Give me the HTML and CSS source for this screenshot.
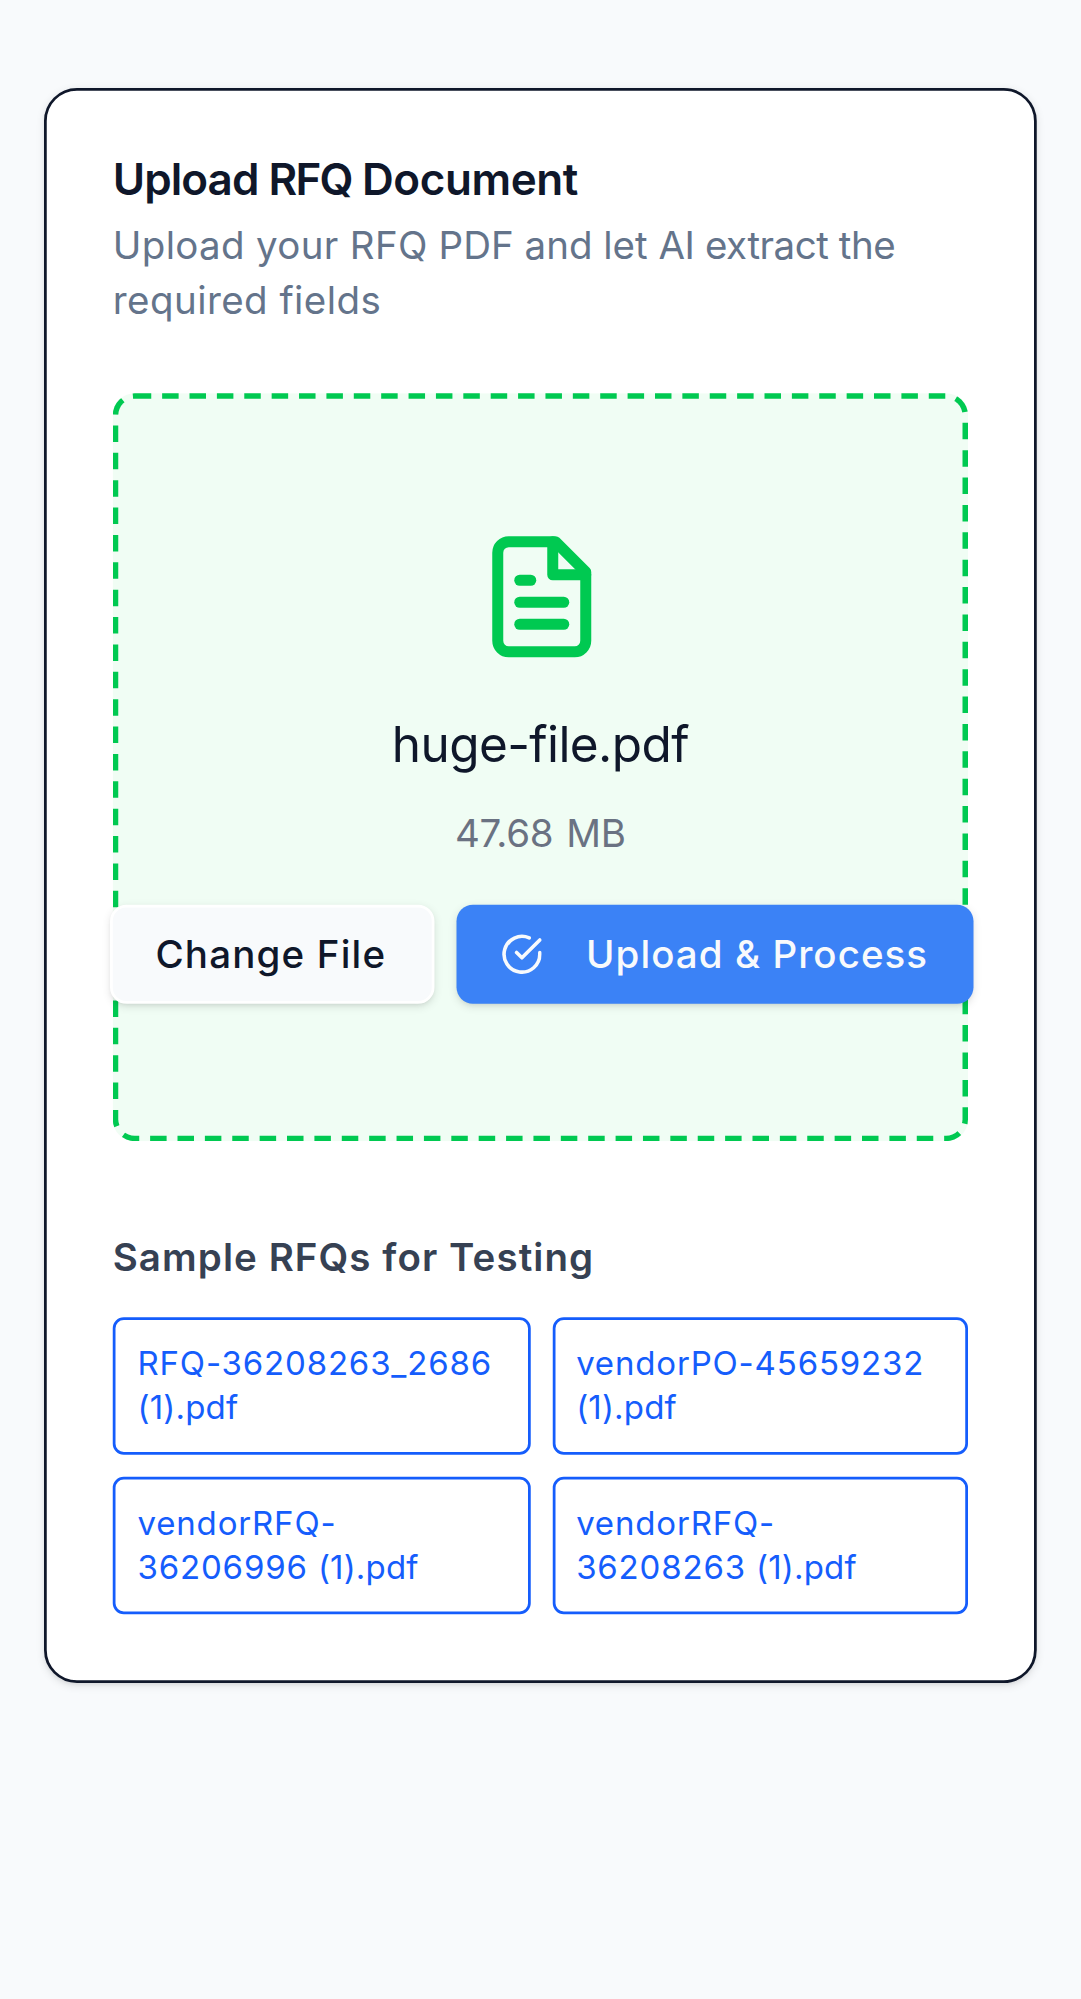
FILE: index.html
```html
<!DOCTYPE html>
<html lang="en">
<head>
<meta charset="utf-8">
<title>Upload RFQ Document</title>
<link rel="stylesheet" href="styles.css">
</head>
<body>
<main class="page">
  <section class="card">
    <header class="card-header">
      <h1 class="card-title">Upload <span class="title-acronym">RFQ</span> <span class="title-noun">Document</span></h1>
      <p class="card-description"><span class="track-wide">Upload your RFQ</span> PDF and let <span class="track-tight">AI extract the</span> <span class="track-wider">required fields</span></p>
    </header>
    <div class="dropzone">
      <svg class="file-icon" viewBox="0 0 24 24" fill="none" stroke="currentColor" stroke-width="2" stroke-linecap="round" stroke-linejoin="round" aria-hidden="true">
        <path d="M14.5 2H6a2 2 0 0 0-2 2v16a2 2 0 0 0 2 2h12a2 2 0 0 0 2-2V7.5L14.5 2z"/>
        <path d="M14 2v6h6"/>
        <path d="M10 9H8"/>
        <path d="M16 13H8"/>
        <path d="M16 17H8"/>
      </svg>
      <p class="file-name">huge-file.pdf</p>
      <p class="file-size">47.68 MB</p>
      <div class="actions">
        <button class="button button-light" type="button">Change File</button>
        <button class="button button-primary" type="button">
          <svg class="button-icon" viewBox="0 0 24 24" fill="none" stroke="currentColor" stroke-width="2" stroke-linecap="round" stroke-linejoin="round" aria-hidden="true">
            <path d="M22 11.08V12a10 10 0 1 1-5.93-9.14"/>
            <path d="m9 11 3 3L22 4"/>
          </svg>
          Upload &amp; Process
        </button>
      </div>
    </div>
    <section class="samples">
      <h2 class="samples-title">Sample RFQs for Testing</h2>
      <div class="samples-grid">
        <a class="sample">RFQ-36208263_2686 <span class="sample-suffix">(1).pdf</span></a>
        <a class="sample">vendorPO-45659232 <span class="sample-suffix">(1).pdf</span></a>
        <a class="sample">vendorRFQ-<br>36206996 <span class="sample-suffix">(1).pdf</span></a>
        <a class="sample">vendorRFQ-<br>36208263 <span class="sample-suffix">(1).pdf</span></a>
      </div>
    </section>
  </section>
</main>
</body>
</html>
```
FILE: styles.css
```css
*, *::before, *::after {
  box-sizing: border-box;
}

html {
  background: #f8fafc;
}

body {
  height: 1999px;
  margin: 0;
  overflow: hidden;
  font-family: Inter, "Liberation Sans", sans-serif;
  font-size: 14px;
  line-height: 20px;
  color: #0f172a;
}

h1, h2, p {
  margin: 0;
}

.page {
  width: 393px;
  padding: 32px 16px;
  transform: scale(2.75);
  transform-origin: 0 0;
}

.card {
  display: flex;
  flex-direction: column;
  gap: 24px;
  padding: 24px;
  background: #fff;
  border: 1px solid #0f172a;
  border-radius: 12px;
  box-shadow: 0 1px 3px rgba(0, 0, 0, 0.1), 0 1px 2px -1px rgba(0, 0, 0, 0.1);
}

.card-header {
  display: flex;
  flex-direction: column;
  gap: 6px;
}

.card-title {
  font-size: 16px;
  line-height: 16px;
  font-weight: 600;
  letter-spacing: -0.34px;
}

.title-acronym {
  letter-spacing: -0.65px;
}

.title-noun {
  letter-spacing: -0.15px;
}

.card-description {
  color: #64748b;
}

.track-wide {
  letter-spacing: 0.12px;
}

.track-wider {
  letter-spacing: 0.16px;
}

.track-tight {
  letter-spacing: -0.16px;
}

.dropzone {
  display: flex;
  flex-direction: column;
  align-items: center;
  padding: 48px;
  background: #f0fdf4;
  border: 2px dashed #00c951;
  border-radius: 8px;
}

.file-icon {
  width: 48px;
  height: 48px;
  margin-bottom: 16px;
  color: #00c951;
}

.file-name {
  margin-bottom: 8px;
  font-size: 18px;
  line-height: 28px;
  letter-spacing: -0.22px;
}

.file-size {
  margin-bottom: 16px;
  color: #6a7282;
  letter-spacing: -0.08px;
  word-spacing: 0.8px;
}

.actions {
  display: flex;
  gap: 8px;
}

.button {
  display: inline-flex;
  flex-shrink: 0;
  align-items: center;
  justify-content: center;
  gap: 8px;
  height: 36px;
  padding: 8px 16px;
  border: 0;
  border-radius: 6px;
  font: 500 14px/20px Inter, "Liberation Sans", sans-serif;
  white-space: nowrap;
  box-shadow: 0 1px 3px rgba(0, 0, 0, 0.1), 0 1px 2px -1px rgba(0, 0, 0, 0.1);
}

.button-light {
  width: 118px;
  color: #0f172a;
  background: #f8fafc;
  border: 1px solid #fff;
  letter-spacing: 0.43px;
}

.button-primary {
  width: 188px;
  color: #f8fafc;
  background: #3b82f6;
  letter-spacing: 0.38px;
}

.button-icon {
  width: 16px;
  height: 16px;
  margin-right: 8px;
}

.samples {
  margin-top: 8px;
}

.samples-title {
  margin-bottom: 12px;
  font-size: 14px;
  line-height: 20px;
  font-weight: 600;
  letter-spacing: 0.39px;
  color: #364153;
}

.samples-grid {
  display: grid;
  grid-template-columns: 1fr 1fr;
  gap: 8px;
}

.sample {
  padding: 8px;
  border: 1px solid #155dfc;
  border-radius: 4px;
  font-size: 12px;
  line-height: 16px;
  letter-spacing: 0.3px;
  color: #155dfc;
}

.sample-suffix {
  letter-spacing: 0.06px;
}
```
